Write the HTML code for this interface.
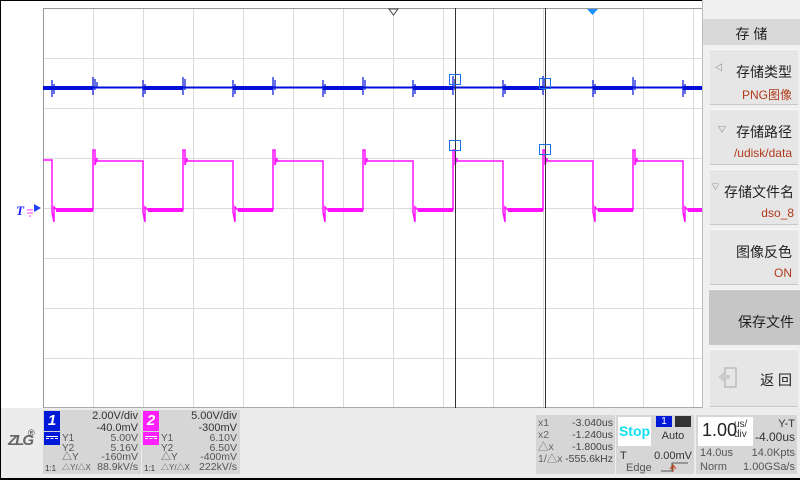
<!DOCTYPE html>
<html><head><meta charset="utf-8"><style>
body{margin:0;width:800px;height:480px;overflow:hidden;background:#fff;font-family:"Liberation Sans","Noto Sans CJK SC",sans-serif;position:relative}
.a{position:absolute}
.btn{position:absolute;left:710px;width:88px;height:56px;background:#e6e6e6;border-top:1px solid #f8f8f8;border-bottom:1px solid #c8c8c8;box-sizing:border-box;text-align:right;padding-right:6px}
.btn .t{font-size:14px;color:#222;margin-top:12px}
.btn .v{font-size:12px;color:#b03a1a;margin-top:4px}
.s{font-size:11px;color:#333;position:absolute;line-height:12px;white-space:nowrap}
.p{background:#d6d6d6;position:absolute}
</style></head><body>
<svg class="a" style="left:0;top:0" width="800" height="410">
<rect x="0" y="0" width="1" height="410" fill="#000"/>
<rect x="0" y="0" width="800" height="1" fill="#000"/>
<g stroke="#dcdcdc" stroke-width="1">
<path d="M93.5,8V408M143.5,8V408M193.5,8V408M243.5,8V408M293.5,8V408M343.5,8V408M393.5,8V408M443.5,8V408M493.5,8V408M543.5,8V408M593.5,8V408M643.5,8V408M693.5,8V408M43,58.5H702M43,108.5H702M43,158.5H702M43,208.5H702M43,258.5H702M43,308.5H702M43,358.5H702"/>
</g>
<rect x="43" y="8" width="1" height="400" fill="#999"/>
<rect x="43" y="8" width="660" height="1" fill="#999"/>
<rect x="43" y="407" width="660" height="1" fill="#aaa"/>
<g fill="#0010d8">
<rect x="43" y="86" width="50" height="4"/><rect x="143" y="86" width="40" height="4"/><rect x="233" y="86" width="40" height="4"/><rect x="323" y="86" width="40" height="4"/><rect x="413" y="86" width="40" height="4"/><rect x="503" y="86" width="40" height="4"/><rect x="593" y="86" width="40" height="4"/><rect x="683" y="86" width="19" height="4"/>
<rect x="43" y="86.5" width="659" height="2"/>
</g>
<path fill="none" stroke="#0010d8" stroke-width="1.2" d="M52,80V97M54,84V94M93,77V95M95,79V90M97,82V88M143,80V97M145,84V94M183,77V95M185,79V90M233,80V97M235,84V94M273,77V95M275,80V90M323,80V97M325,84V94M363,77V95M365,80V90M413,80V97M415,84V94M453,76V95M455,79V90M503,80V97M505,84V94M543,76V95M545,79V90M593,80V97M595,84V94M633,77V95M635,80V90M683,80V97M685,84V94"/>
<g fill="#ff10ff">
<rect x="56" y="208" width="37" height="4"/><rect x="148" y="208" width="35" height="4"/><rect x="238" y="208" width="35" height="4"/><rect x="328" y="208" width="35" height="4"/><rect x="418" y="208" width="35" height="4"/><rect x="508" y="208" width="35" height="4"/><rect x="598" y="208" width="35" height="4"/><rect x="688" y="208" width="14" height="4"/>
</g>
<path fill="none" stroke="#ff10ff" stroke-width="1.5" d="M43,160H52V212L54,222V207L57,210H93V150L95,150V165L97,158V161H143V212L145,222V207L148,210H183V150L185,150V165L187,158V161H233V212L235,222V207L238,210H273V150L275,150V165L277,158V161H323V212L325,222V207L328,210H363V150L365,150V165L367,158V161H413V212L415,222V207L418,210H453V150L455,150V165L457,158V161H503V212L505,222V207L508,210H543V150L545,150V165L547,158V161H593V212L595,222V207L598,210H633V150L635,150V165L637,158V161H683V212L685,222V207L688,210H702"/>
<rect x="455" y="8" width="1" height="400" fill="#333"/>
<rect x="545" y="8" width="1" height="400" fill="#333"/>
<g fill="none" stroke="#1a6fe8" stroke-width="1"><rect x="449.5" y="74.5" width="11" height="10"/><rect x="539.5" y="78.5" width="11" height="10"/><rect x="449.5" y="140.5" width="11" height="10"/><rect x="539.5" y="144.5" width="11" height="10"/></g>
<path d="M389,9H398L393.5,15Z" fill="#fff" stroke="#444"/>
<path d="M587,9H598L592.5,15Z" fill="#1e90ff"/>
<text x="16" y="215" font-size="13" font-style="italic" font-weight="bold" fill="#2020ff" font-family="Liberation Serif">T</text>
<path d="M27,210H33M27,213H33M29,216H31" stroke="#ff40ff"/>
<path d="M34,204L41,208L34,212Z" fill="#2040ff"/>
<rect x="702" y="0" width="98" height="410" fill="#f0f0f0"/>
<rect x="702" y="0" width="1" height="410" fill="#bbb"/>
<rect x="703" y="19" width="97" height="26" fill="#d9d9d9"/>
</svg>
<div class="a" style="left:703px;top:24px;width:97px;text-align:center;font-size:14px;color:#222">存 储</div>
<div class="btn" style="top:49px"><div class="t">存储类型</div><div class="v">PNG图像</div><span class="a" style="left:5px;top:12px;font-size:8px;color:#555">◁</span></div>
<div class="btn" style="top:109px"><div class="t">存储路径</div><div class="v">/udisk/data</div><span class="a" style="left:8px;top:14px;font-size:8px;color:#555">▽</span></div>
<div class="btn" style="top:169px;padding-right:4px"><div class="t">存储文件名</div><div class="v">dso_8</div><span class="a" style="left:2px;top:12px;font-size:7px;color:#555">▽</span></div>
<div class="btn" style="top:229px"><div class="t">图像反色</div><div class="v">ON</div></div>
<div class="btn" style="top:289px;left:709px;width:91px;background:#c6c6c6"><div class="t" style="margin-top:22px">保存文件</div></div>
<div class="btn" style="top:349px;height:58px"><div class="t" style="margin-top:20px">返 回</div>
<svg class="a" style="left:6px;top:16px" width="24" height="24"><rect x="9" y="2" width="11" height="19" fill="none" stroke="#bbb" stroke-width="1.5"/><path d="M2,11L8,6V9H14V13H8V16Z" fill="#ccc"/></svg></div>
<div class="a" style="left:0;top:408px;width:800px;height:72px;background:#ececec;border-left:1px solid #000;box-sizing:border-box"></div>
<div class="a" style="left:0;top:478px;width:800px;height:2px;background:#000"></div>
<div class="a" style="left:8px;top:432px;font-size:15px;font-style:italic;font-weight:bold;color:#666;font-family:'Liberation Sans';letter-spacing:-2px">ZLG</div>
<div class="a" style="left:28px;top:428px;font-size:9px;color:#333">®</div>
<div class="p" style="left:43px;top:410px;width:98px;height:64px"></div>
<div class="a" style="left:44px;top:411px;width:16px;height:20px;background:#0018d8;color:#fff;font-weight:bold;font-style:italic;font-size:15px;text-align:center;line-height:20px">1</div>
<div class="a" style="left:44px;top:432px;width:16px;height:13px;background:#0018d8"><div style="margin:4px 2px;border-top:1px solid #fff;border-bottom:1px dashed #fff;height:1px"></div></div>
<div class="s" style="left:61px;top:410px;width:77px;text-align:right">2.00V/div</div>
<div class="s" style="left:61px;top:422px;width:77px;text-align:right">-40.0mV</div>
<div class="s" style="left:62px;top:434px;line-height:9.5px;font-size:10px;color:#555">Y1<br>Y2<br>△Y<br><span style="font-size:8px">△Y/△X</span></div>
<div class="s" style="left:61px;top:434px;width:77px;text-align:right;line-height:9.5px;font-size:10.5px;color:#555">5.00V<br>5.16V<br>-160mV<br>88.9kV/s</div>
<div class="s" style="left:45px;top:463px;font-size:8px;color:#333">1:1</div>
<div class="p" style="left:142px;top:410px;width:98px;height:64px"></div>
<div class="a" style="left:143px;top:411px;width:16px;height:20px;background:#ff20ff;color:#fff;font-weight:bold;font-style:italic;font-size:15px;text-align:center;line-height:20px">2</div>
<div class="a" style="left:143px;top:432px;width:16px;height:13px;background:#ff20ff"><div style="margin:4px 2px;border-top:1px solid #fff;border-bottom:1px dashed #fff;height:1px"></div></div>
<div class="s" style="left:160px;top:410px;width:77px;text-align:right">5.00V/div</div>
<div class="s" style="left:160px;top:422px;width:77px;text-align:right">-300mV</div>
<div class="s" style="left:161px;top:434px;line-height:9.5px;font-size:10px;color:#555">Y1<br>Y2<br>△Y<br><span style="font-size:8px">△Y/△X</span></div>
<div class="s" style="left:160px;top:434px;width:77px;text-align:right;line-height:9.5px;font-size:10.5px;color:#555">6.10V<br>6.50V<br>-400mV<br>222kV/s</div>
<div class="s" style="left:144px;top:463px;font-size:8px;color:#333">1:1</div>
<div class="p" style="left:536px;top:415px;width:79px;height:59px"></div>
<div class="s" style="left:538px;top:417px;line-height:12px;font-size:10.5px;color:#666">x1<br>x2<br>△x<br>1/△x</div>
<div class="s" style="left:536px;top:417px;width:77px;text-align:right;line-height:12px;font-size:10.5px;color:#444">-3.040us<br>-1.240us<br>-1.800us<br>-555.6kHz</div>
<div class="p" style="left:616px;top:415px;width:78px;height:59px"></div>
<div class="a" style="left:618px;top:417px;width:33px;height:29px;background:#fff;color:#10e0f0;font-weight:bold;font-size:14px;text-align:center;line-height:29px">Stop</div>
<div class="a" style="left:656px;top:416px;width:16px;height:11px;background:#0018d8;color:#fff;font-size:10px;text-align:center;line-height:11px">1</div>
<div class="a" style="left:675px;top:416px;width:16px;height:11px;background:#333"></div>
<div class="s" style="left:653px;top:430px;width:40px;text-align:center">Auto</div>
<div class="s" style="left:620px;top:450px">T</div>
<div class="s" style="left:640px;top:450px;width:52px;text-align:right">0.00mV</div>
<div class="s" style="left:626px;top:462px;color:#555">Edge</div>
<svg class="a" style="left:660px;top:459px" width="30" height="14"><path d="M1,12H12V4H28" fill="none" stroke="#555"/><path d="M10,10L13,6L16,10M13,6V13" fill="none" stroke="#c04010"/></svg>
<div class="p" style="left:696px;top:415px;width:101px;height:59px"></div>
<div class="a" style="left:698px;top:417px;width:55px;height:29px;background:#fff"></div>
<div class="a" style="left:702px;top:420px;font-size:18px;color:#222">1.00</div>
<div class="a" style="left:734px;top:420px;font-size:10px;color:#333;line-height:10px">us/<br>div</div>
<div class="s" style="left:755px;top:418px;width:40px;text-align:right">Y-T</div>
<div class="s" style="left:755px;top:431px;width:40px;text-align:right;font-size:12px">-4.00us</div>
<div class="s" style="left:700px;top:447px;color:#555">14.0us</div>
<div class="s" style="left:740px;top:447px;width:55px;text-align:right;color:#555">14.0Kpts</div>
<div class="s" style="left:700px;top:461px;color:#555">Norm</div>
<div class="s" style="left:735px;top:461px;width:60px;text-align:right;color:#555">1.00GSa/s</div>
</body></html>
